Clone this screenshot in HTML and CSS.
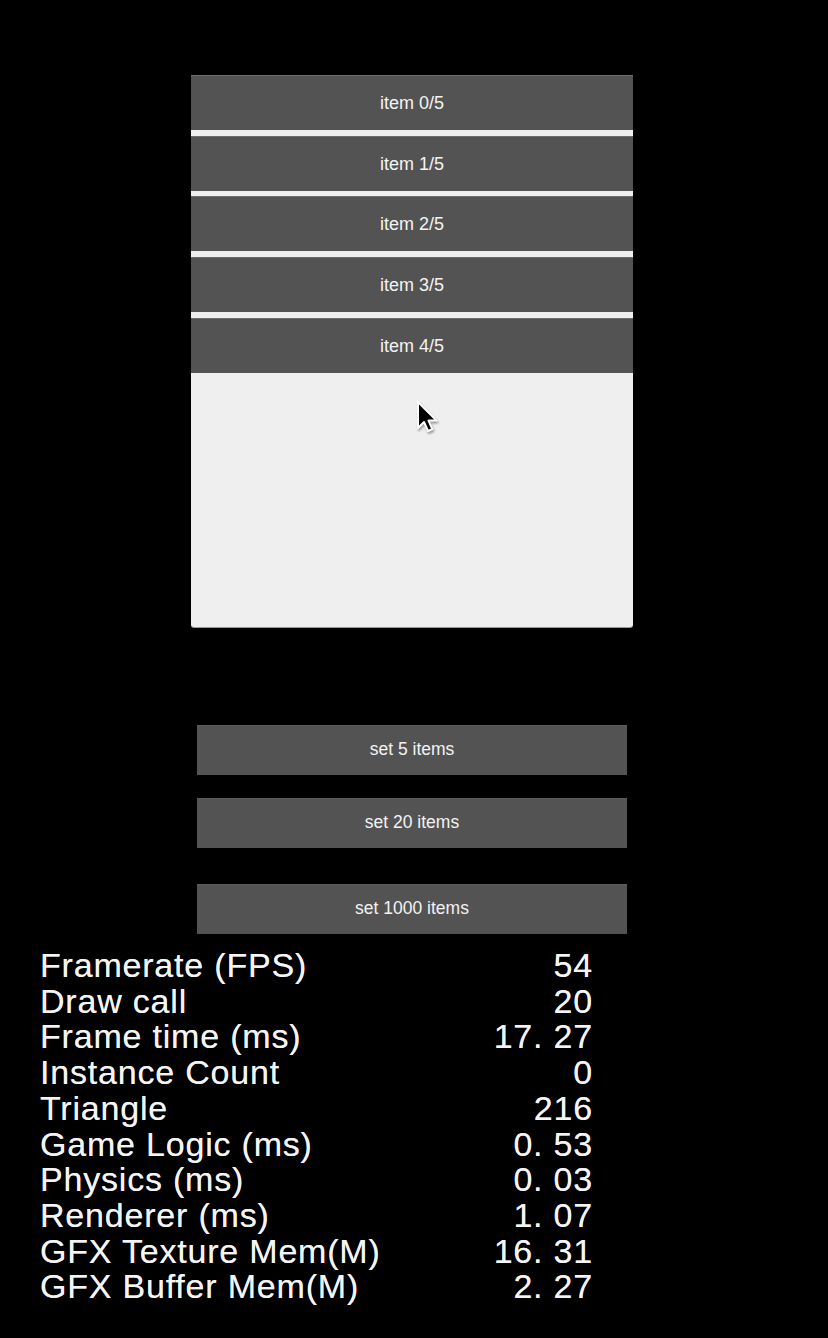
FILE: index.html
```html
<!DOCTYPE html>
<html lang="en">
<head>
<meta charset="utf-8">
<title>List demo</title>
<link rel="stylesheet" href="styles.css">
</head>
<body>
<main class="scene">
  <section class="panel">
    <ul class="list">
      <li class="item">item 0/5</li>
      <li class="item">item 1/5</li>
      <li class="item">item 2/5</li>
      <li class="item">item 3/5</li>
      <li class="item">item 4/5</li>
    </ul>
    <svg class="cursor" width="26" height="36" viewBox="0 0 26 36" aria-hidden="true">
      <path d="M2 2 L2 28 L8 22 L12 31 L16.3 29.2 L12.5 20.6 L20.6 20.6 Z" fill="#000" stroke="#fff" stroke-width="2" stroke-linejoin="round"/>
    </svg>
  </section>
  <div class="controls">
    <button class="btn btn-first">set 5 items</button>
    <button class="btn btn-second">set 20 items</button>
    <button class="btn btn-third">set 1000 items</button>
  </div>
</main>
<dl class="stats">
  <dt>Framerate (FPS)</dt><dd>54</dd>
  <dt>Draw call</dt><dd>20</dd>
  <dt>Frame time (ms)</dt><dd>17. 27</dd>
  <dt>Instance Count</dt><dd>0</dd>
  <dt>Triangle</dt><dd>216</dd>
  <dt>Game Logic (ms)</dt><dd>0. 53</dd>
  <dt>Physics (ms)</dt><dd>0. 03</dd>
  <dt>Renderer (ms)</dt><dd>1. 07</dd>
  <dt>GFX Texture Mem(M)</dt><dd>16. 31</dd>
  <dt>GFX Buffer Mem(M)</dt><dd>2. 27</dd>
</dl>
</body>
</html>
```

FILE: styles.css
```css
html, body {
  margin: 0;
  padding: 0;
  background: #000;
}

body {
  width: 828px;
  height: 1338px;
  overflow: hidden;
  font-family: "Liberation Sans", Arial, sans-serif;
  color: #f2f2f2;
}

.scene {
  width: 824px;
  display: flex;
  flex-direction: column;
  align-items: center;
  padding-top: 75px;
}

.panel {
  position: relative;
  width: 442px;
  height: 552px;
  background: #efefef;
  border-radius: 0 0 3px 3px;
  box-shadow: 0 1px 0 #9a9a9a;
}

.list {
  list-style: none;
  margin: 0;
  padding: 0;
  display: flex;
  flex-direction: column;
  gap: 5.67px;
}

.item {
  height: 53px;
  padding-top: 1px;
  border-top: 1px solid #6c6c6c;
  background: #535353;
  display: flex;
  align-items: center;
  justify-content: center;
  font-size: 18px;
  color: #f4f4f4;
}

.cursor {
  position: absolute;
  left: 225px;
  top: 325px;
  filter: drop-shadow(1px 2px 1px rgba(0, 0, 0, 0.35));
}

.controls {
  display: flex;
  flex-direction: column;
  align-items: center;
  margin-top: 98px;
}

.btn {
  width: 430px;
  height: 50px;
  border: 0;
  margin: 0;
  padding: 0 0 2px;
  background: #535353;
  color: #f2f2f2;
  font-family: "Liberation Sans", Arial, sans-serif;
  font-size: 17.5px;
  border-top: 1px solid #5c5c5c;
}

.btn-second {
  margin-top: 23px;
}

.btn-third {
  margin-top: 36px;
}

.stats {
  margin: 14px 0 0 40px;
  width: 552px;
  display: grid;
  grid-template-columns: 1fr auto;
  font-size: 34px;
  line-height: 35.7px;
  letter-spacing: 0.8px;
  color: #f4f4f4;
  text-shadow: 0 0 0.6px rgba(244, 244, 244, 0.8);
}

.stats dt,
.stats dd {
  margin: 0;
  white-space: nowrap;
}

.stats dd {
  text-align: right;
  margin-right: -1px;
}
```
